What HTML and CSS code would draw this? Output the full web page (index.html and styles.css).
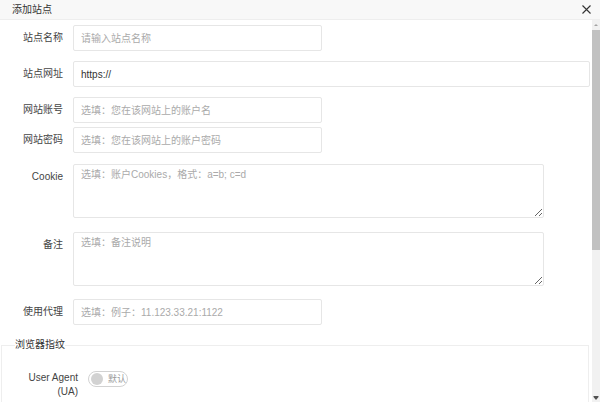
FILE: index.html
```html
<!DOCTYPE html>
<html lang="zh">
<head>
<meta charset="utf-8">
<title>添加站点</title>
<link rel="stylesheet" href="styles.css">
</head>
<body>
<div class="dialog">
  <div class="head">
    <span class="title">添加站点</span>
    <svg class="close" width="9" height="9" viewBox="0 0 9 9"><path d="M0.5 0.5L8.5 8.5M8.5 0.5L0.5 8.5" stroke="#333" stroke-width="1.1" fill="none"/></svg>
  </div>
  <div class="body">
    <div class="content">
      <div class="row r1">
        <label class="lab">站点名称</label>
        <input class="inp short" placeholder="请输入站点名称">
      </div>
      <div class="row r2">
        <label class="lab">站点网址</label>
        <input class="inp long" value="https://">
      </div>
      <div class="row r3">
        <label class="lab">网站账号</label>
        <input class="inp short" placeholder="选填：您在该网站上的账户名">
      </div>
      <div class="row r4">
        <label class="lab">网站密码</label>
        <input class="inp short" placeholder="选填：您在该网站上的账户密码">
      </div>
      <div class="row r5">
        <label class="lab">Cookie</label>
        <textarea class="ta" placeholder="选填：账户Cookies，格式：a=b; c=d"></textarea>
      </div>
      <div class="row r6">
        <label class="lab">备注</label>
        <textarea class="ta" placeholder="选填：备注说明"></textarea>
      </div>
      <div class="row r7">
        <label class="lab">使用代理</label>
        <input class="inp short" placeholder="选填：例子：11.123.33.21:1122">
      </div>
      <fieldset class="fs">
        <legend class="legend">浏览器指纹</legend>
        <div class="ua-row">
          <label class="ua-lab">User Agent (UA)</label>
          <div class="switch"><span class="knob"></span><span class="sw-text">默认</span></div>
        </div>
      </fieldset>
    </div>
    <div class="scrollbar">
      <div class="arrow"><svg width="8" height="8" viewBox="0 0 8 8"><path d="M2 5L4 3L6 5Z" fill="#a3a3a3"/></svg></div>
      <div class="track"><div class="thumb"></div></div>
      <div class="arrow"><svg width="8" height="8" viewBox="0 0 8 8"><path d="M1.5 3H6.5L4 6Z" fill="#505050"/><rect x="1.5" y="2" width="5" height="1" fill="#505050"/></svg></div>
    </div>
  </div>
</div>
</body>
</html>
```
FILE: styles.css
```css
* { box-sizing: border-box; }
html, body { margin: 0; padding: 0; background: #fff; }
body {
  font-family: "Liberation Sans", "Noto Sans CJK SC", sans-serif;
  font-size: 10px;
  color: #333;
  width: 600px;
  height: 402px;
  overflow: hidden;
}
.dialog { width: 600px; height: 402px; display: flex; flex-direction: column; }
.head {
  height: 20px;
  flex: none;
  background: #f8f8f8;
  border-bottom: 1px solid #eee;
  display: flex;
  align-items: center;
  justify-content: space-between;
  padding: 0 9px 0 12px;
}
.title { font-size: 10px; color: #333; line-height: 20px; height: 20px; overflow: hidden; }
.close { display: block; }
.body { flex: 1; display: flex; overflow: hidden; }
.content { flex: 1; padding-top: 5px; min-width: 0; }
.row { display: flex; align-items: flex-start; }
.lab {
  width: 73px;
  height: 26px;
  overflow: hidden;
  flex: none;
  padding-right: 10px;
  text-align: right;
  line-height: 26px;
  color: #444;
  font-size: 10px;
}
.inp, .ta {
  font-family: "Liberation Sans", "Noto Sans CJK SC", sans-serif;
  font-size: 10px;
  color: #333;
  border: 1px solid #e6e6e6;
  border-radius: 2px;
  background: #fff;
  padding: 0 7px;
  margin: 0;
  outline: none;
}
.inp { height: 26px; }
.inp::placeholder, .ta::placeholder { color: #aaa; }
.short { width: 249px; }
.long { width: 517px; }
.ta { width: 471px; height: 54px; padding-top: 3px; resize: vertical; line-height: 14px; display: block; }
.r1 { margin-bottom: 10px; }
.r2 { margin-bottom: 10px; }
.r3 { margin-bottom: 4px; }
.r4 { margin-bottom: 11px; }
.r5 { margin-bottom: 14px; }
.r6 { margin-bottom: 13px; }
.r7 { margin-bottom: 13px; }
.fs {
  margin: 0 3px 0 1px;
  border: 1px solid #eee;
  padding: 0 13px 40px 13px;
}
.legend { padding: 0; line-height: 14px; height: 14px; font-size: 10px; color: #333; }
.ua-row { display: flex; align-items: flex-start; margin-top: 19px; }
.ua-lab {
  width: 63px;
  flex: none;
  text-align: right;
  line-height: 14px;
  font-size: 10px;
  color: #444;
  margin-right: 10px;
}
.switch {
  width: 40px;
  height: 16px;
  border: 1px solid #d2d2d2;
  border-radius: 8px;
  display: flex;
  align-items: center;
  padding-left: 2px;
  margin-top: 0;
}
.knob { width: 12px; height: 12px; border-radius: 50%; background: #d2d2d2; flex: none; }
.sw-text { font-size: 9px; color: #999; margin-left: 5px; line-height: 14px; }
.scrollbar { width: 8px; flex: none; background: #f1f1f1; display: flex; flex-direction: column; }
.arrow { height: 9px; flex: none; display: flex; align-items: center; justify-content: center; }
.arrow svg { display: block; }
.track { flex: 1; padding-top: 1px; }
.thumb { height: 220px; background: #c1c1c1; }
```
